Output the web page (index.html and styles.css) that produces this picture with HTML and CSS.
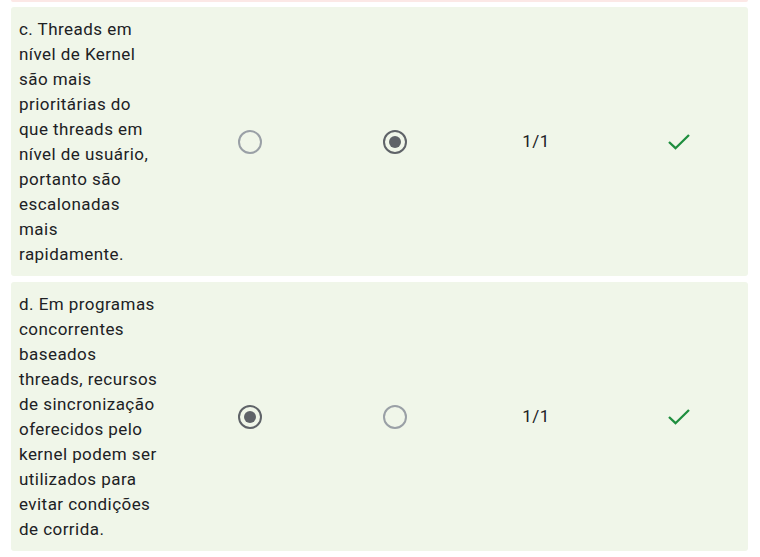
FILE: index.html
```html
<!DOCTYPE html>
<html lang="pt">
<head>
<meta charset="utf-8">
<link rel="stylesheet" href="styles.css">
</head>
<body>
<div class="list">
  <div class="prev"></div>
  <div class="row">
    <div class="label">c. Threads em<br>nível de Kernel<br>são mais<br>prioritárias do<br>que threads em<br>nível de usuário,<br>portanto são<br>escalonadas<br>mais<br>rapidamente.</div>
    <div class="cell"><span class="radio"></span></div>
    <div class="cell"><span class="radio checked"></span></div>
    <div class="cell score">1/1</div>
    <div class="cell"><svg class="check" width="22" height="16" viewBox="0 0 22 16"><polyline points="1,8 7.5,14.2 21,1" fill="none" stroke="#1e8e3e" stroke-width="2.3"/></svg></div>
  </div>
  <div class="row">
    <div class="label">d. Em programas<br>concorrentes<br>baseados<br>threads, recursos<br>de sincronização<br>oferecidos pelo<br>kernel podem ser<br>utilizados para<br>evitar condições<br>de corrida.</div>
    <div class="cell"><span class="radio checked"></span></div>
    <div class="cell"><span class="radio"></span></div>
    <div class="cell score">1/1</div>
    <div class="cell"><svg class="check" width="22" height="16" viewBox="0 0 22 16"><polyline points="1,8 7.5,14.2 21,1" fill="none" stroke="#1e8e3e" stroke-width="2.3"/></svg></div>
  </div>
</div>
</body>
</html>
```

FILE: styles.css
```css
html, body {
  margin: 0;
  padding: 0;
  background: #ffffff;
}
body {
  font-family: Roboto, "Liberation Sans", sans-serif;
  font-size: 17px;
  letter-spacing: 0.45px;
  color: #202124;
}
.list {
  display: flex;
  flex-direction: column;
  gap: 6px;
  padding: 0 12px 0 11px;
}
.prev {
  height: 2px;
  margin-bottom: -1px;
  background: #fce8e6;
  border-radius: 0 0 3px 3px;
}
.row {
  display: grid;
  grid-template-columns: 166px 145px 145px 138px 1fr;
  background: #f0f6e9;
  border-radius: 3px;
}
.label {
  padding: 10px 8px 9px 8px;
  line-height: 25px;
  white-space: nowrap;
}
.cell {
  display: flex;
  align-items: center;
  justify-content: center;
}
.score {
  padding-bottom: 2px;
}
.radio {
  width: 24px;
  height: 24px;
  box-sizing: border-box;
  border: 2px solid #9aa0a6;
  border-radius: 50%;
  display: flex;
  align-items: center;
  justify-content: center;
}
.radio.checked {
  border-color: #5f6368;
}
.radio.checked::after {
  content: "";
  width: 12px;
  height: 12px;
  border-radius: 50%;
  background: #5f6368;
}
.check {
  display: block;
  margin-left: 4px;
}
```
